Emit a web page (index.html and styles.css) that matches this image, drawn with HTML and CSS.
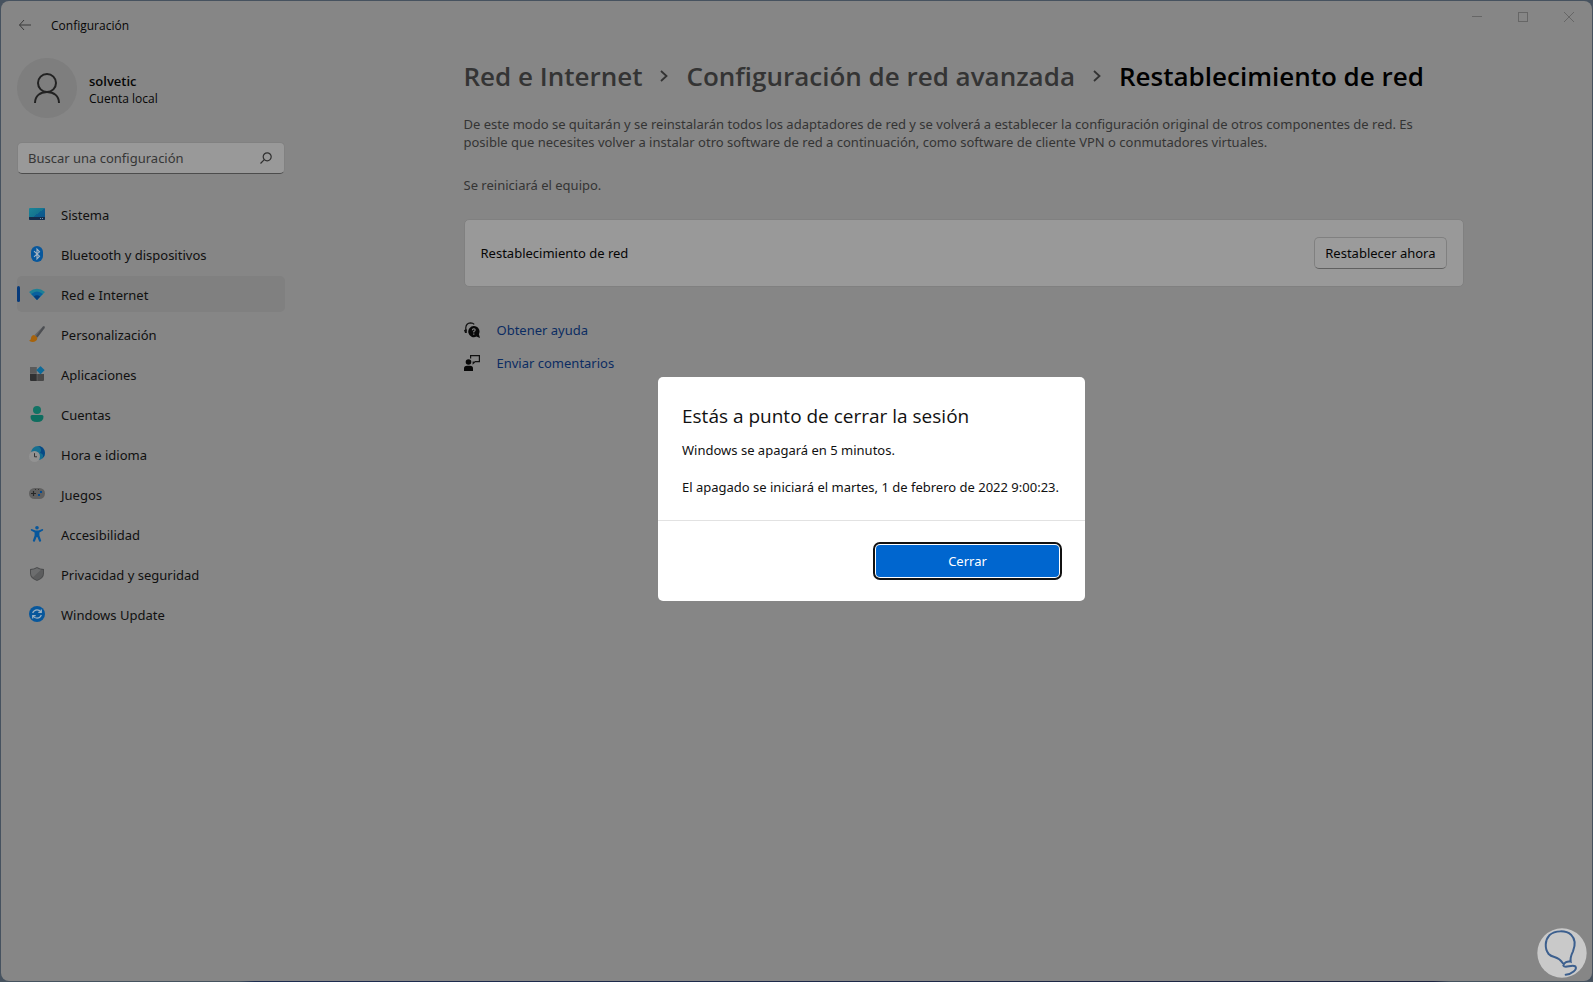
FILE: index.html
```html
<!DOCTYPE html>
<html lang="es">
<head>
  <meta charset="UTF-8" />
  <title>Configuración - Restablecimiento de red</title>
  <meta name="viewport" content="width=device-width, initial-scale=1.0" />
  <link rel="stylesheet" href="styles.css">
</head>
<body>

  <div class="window">

    <header class="titlebar">
      <button class="back" aria-label="Atrás">
        <svg width="14" height="14" viewBox="0 0 14 14" fill="none" stroke="#3a3a3a"><path d="M6 2 L1.5 7 L6 12 M1.5 7 H13"/></svg>
      </button>
      <span class="app-name">Configuración</span>
      <div class="controls">
        <button aria-label="Minimizar"><svg width="10" height="10" viewBox="0 0 10 10" fill="none" stroke="#666"><path d="M0 4.5 H10"/></svg></button>
        <button aria-label="Maximizar"><svg width="10" height="10" viewBox="0 0 10 10" fill="none" stroke="#666"><rect x="0.5" y="0.5" width="9" height="9"/></svg></button>
        <button aria-label="Cerrar ventana"><svg width="10" height="10" viewBox="0 0 10 10" fill="none" stroke="#666"><path d="M0 0 L10 10 M10 0 L0 10"/></svg></button>
      </div>
    </header>

    <div class="columns">

      <aside class="sidebar">
        <div class="account">
          <div class="avatar">
            <svg width="28" height="32" viewBox="0 0 28 32" fill="none" stroke="#222" stroke-width="2"><circle cx="14" cy="11" r="9"/><path d="M2 31 C2 24 7 20 14 20 S26 24 26 31"/></svg>
          </div>
          <div class="account-text">
            <div class="user">solvetic</div>
            <div class="user-type">Cuenta local</div>
          </div>
        </div>

        <div class="search">
          <input type="text" aria-label="Buscar una configuración" placeholder="Buscar una configuración">
          <svg width="12" height="12" viewBox="0 0 12 12" fill="none" stroke="#303030" stroke-width="1.2"><circle cx="7.2" cy="4.8" r="4"/><path d="M4.3 7.7 L0.5 11.5"/></svg>
        </div>

        <nav>
          <a href="#">
            <svg width="16" height="16" viewBox="0 0 16 16"><defs><linearGradient id="g-sys" x1="0" y1="0" x2="1" y2="1"><stop offset="0" stop-color="#1b8598"/><stop offset="0.5" stop-color="#14748f"/><stop offset="0.5" stop-color="#0d6090"/><stop offset="1" stop-color="#084f8a"/></linearGradient></defs><rect y="2" width="16" height="12" rx="1" fill="url(#g-sys)"/><path d="M0 11 H16 V13 Q16 14 15 14 H1 Q0 14 0 13 Z" fill="#142c4c"/><path d="M11 12.5 H12 M13 12.5 H14" stroke="#7494ac"/></svg>
            Sistema
          </a>
          <a href="#">
            <svg width="16" height="16" viewBox="0 0 16 16"><rect x="2" width="12" height="16" rx="6" fill="#07579c"/><path d="M5 5.2 L10.5 10.2 L8 12.8 V3.2 L10.5 5.8 L5 10.8" fill="none" stroke="#a8b6c4" stroke-width="1.1"/></svg>
            Bluetooth y dispositivos
          </a>
          <a href="#" class="active">
            <svg width="16" height="16" viewBox="0 0 16 16"><path d="M0 6 Q8 -0.5 16 6 L8 14 Z" fill="#1d8096"/><path d="M2.2 8 Q8 3 13.8 8 L8 14 Z" fill="#08609e"/><path d="M4.8 10.6 Q8 8 11.2 10.6 L8 14 Z" fill="#053d7c"/></svg>
            Red e Internet
          </a>
          <a href="#">
            <svg width="16" height="16" viewBox="0 0 16 16"><path d="M5.5 9 L14 0.6 Q16 -0.4 15.6 2 L8.4 11.6 Z" fill="#646668"/><path d="M14 0.6 Q16 -0.4 15.6 2 L8.4 11.6 L7 10.2 Z" fill="#4c4e52"/><path d="M5.2 9 Q2.2 9.4 2 12.2 Q1.8 14.2 0 14.8 Q5 17.4 7.6 14.2 Q8.8 12.4 7.8 11 Z" fill="#a7630b"/></svg>
            Personalización
          </a>
          <a href="#">
            <svg width="16" height="16" viewBox="0 0 16 16"><path d="M1 1 H7.8 V7.8 H1 Z" fill="#5a5a5a"/><path d="M1 8 H7.8 V15 H2 Q1 15 1 14 Z" fill="#303132"/><path d="M8.2 8 H15 V14 Q15 15 14 15 H8.2 Z" fill="#484848"/><rect x="8.5" y="1.2" width="6" height="6" rx="0.6" transform="rotate(45 11.5 4.2)" fill="#0e6a98"/></svg>
            Aplicaciones
          </a>
          <a href="#">
            <svg width="16" height="16" viewBox="0 0 16 16"><circle cx="8" cy="4" r="4" fill="#117365"/><path d="M3 9 H13 Q14.5 9 14.5 10.8 Q14.5 16 8 16 Q1.5 16 1.5 10.8 Q1.5 9 3 9 Z" fill="#0e6d5f"/></svg>
            Cuentas
          </a>
          <a href="#">
            <svg width="16" height="16" viewBox="0 0 16 16"><circle cx="9" cy="7" r="7" fill="#166f90"/><path d="M9 0 Q14 3 11 7 Q16 8 13 12.8 Q16 10.5 16 7 Q15 0 9 0 Z" fill="#074986"/><circle cx="5.5" cy="10.5" r="5.5" fill="#929292"/><path d="M5.5 7.2 V10.8 H8" fill="none" stroke="#333"/></svg>
            Hora e idioma
          </a>
          <a href="#">
            <svg width="16" height="16" viewBox="0 0 16 16"><rect y="2" width="16" height="11" rx="5.5" fill="#606060"/><path d="M2 7.5 H7 M4.5 5 V10" stroke="#282828" stroke-width="1.2"/><rect x="11" y="5" width="2" height="2" fill="#064b8f"/><rect x="9" y="8" width="2" height="2" fill="#064b8f"/><path d="M6 3.5 H7 M9 3.5 H10" stroke="#333"/></svg>
            Juegos
          </a>
          <a href="#">
            <svg width="16" height="16" viewBox="0 0 16 16"><circle cx="8" cy="1.8" r="1.8" fill="#07579c"/><path d="M2.6 3 L6.5 4.6 H9.5 L13.4 3 Q14.6 3.2 14 4.4 L10.4 6.4 V9.5 L12.2 14.8 Q11.6 16.2 10.2 15.6 L8.4 11 H7.6 L5.8 15.6 Q4.4 16.2 3.8 14.8 L5.6 9.5 V6.4 L2 4.4 Q1.4 3.2 2.6 3 Z" fill="#07579c"/></svg>
            Accesibilidad
          </a>
          <a href="#">
            <svg width="16" height="16" viewBox="0 0 16 16"><path d="M8 1 Q11 3 15 3 V7.5 Q15 12.5 8 15 Q1 12.5 1 7.5 V3 Q5 3 8 1 Z" fill="#4c4d4e"/><path d="M8 2.2 Q11 4 14 4 V7.5 Q13.8 11.6 8 13.9 Q2.2 11.6 2 7.5 V4 Q5 4 8 2.2 Z" fill="#5c5d5e"/><path d="M8 2.2 Q5 4 2 4 V7.5 Q2.2 9.5 4 11.2 L12 3.7 Q10 3.4 8 2.2 Z" fill="#6c6d6e"/></svg>
            Privacidad y seguridad
          </a>
          <a href="#">
            <svg width="16" height="16" viewBox="0 0 16 16"><circle cx="8" cy="8" r="8" fill="#07579c"/><path d="M3.6 7 Q5 3.8 8 3.8 Q10.5 3.8 12 6 M12.3 3.4 V6.4 H9.3 M12.4 9 Q11 12.2 8 12.2 Q5.5 12.2 4 10 M3.7 12.6 V9.6 H6.7" fill="none" stroke="#9bb0c2" stroke-width="1.2"/></svg>
            Windows Update
          </a>
        </nav>
      </aside>

      <main>
        <div class="page">
          <h1 class="breadcrumb">
            <a href="#">Red e Internet</a>
            <svg width="8" height="12" viewBox="0 0 8 12" fill="none" stroke="#333" stroke-width="1.8"><path d="M1 1 L6.5 6 L1 11"/></svg>
            <a href="#">Configuración de red avanzada</a>
            <svg width="8" height="12" viewBox="0 0 8 12" fill="none" stroke="#333" stroke-width="1.8"><path d="M1 1 L6.5 6 L1 11"/></svg>
            <span>Restablecimiento de red</span>
          </h1>

          <p class="intro">De este modo se quitarán y se reinstalarán todos los adaptadores de red y se volverá a establecer la configuración original de otros componentes de red. Es<br>posible que necesites volver a instalar otro software de red a continuación, como software de cliente VPN o conmutadores virtuales.</p>
          <p class="intro">Se reiniciará el equipo.</p>

          <div class="card">
            <span>Restablecimiento de red</span>
            <button>Restablecer ahora</button>
          </div>

          <div class="links">
            <a href="#">
              <svg width="16" height="16" viewBox="0 0 16 16"><path d="M1.8 9 V5.5 Q2.2 1 6.5 0.8 Q9 0.8 10.2 2.4" fill="none" stroke="#111" stroke-width="1.2"/><path d="M0 8 L2.8 7.2 V11 H1 Z" fill="#111"/><path d="M9.8 4 A5.6 5.6 0 1 0 12.4 14.6 L16 16 L14.9 12.2 A5.6 5.6 0 0 0 9.8 4 Z" fill="#080808"/><path d="M8.3 8.2 Q8.4 6.8 9.8 6.8 Q11.2 6.9 11.1 8.2 Q11 9 9.8 9.6 V10.6 M9.8 11.6 V12.8" fill="none" stroke="#888" stroke-width="1.1"/></svg>
              Obtener ayuda
            </a>
            <a href="#">
              <svg width="16" height="16" viewBox="0 0 16 16"><circle cx="4.5" cy="7" r="2.8" fill="#080808"/><path d="M0 16 V13.5 Q0 10.8 3 10.8 H6 Q9 10.8 9 13.5 V16 Z" fill="#080808"/><path d="M6.6 3.5 V0.6 H15.4 V6.6 H11.2 L9.2 8.4 V6.4" fill="none" stroke="#111" stroke-width="1.2"/></svg>
              Enviar comentarios
            </a>
          </div>
        </div>
      </main>

    </div>
  </div>

  <!-- shutdown warning -->
  <div class="dialog" role="dialog" aria-labelledby="dialog-title">
    <div class="dialog-body">
      <h2 id="dialog-title">Estás a punto de cerrar la sesión</h2>
      <p>Windows se apagará en 5 minutos.</p>
      <p>El apagado se iniciará el martes, 1 de febrero de 2022 9:00:23.</p>
    </div>
    <div class="dialog-footer">
      <button>Cerrar</button>
    </div>
  </div>

  <div class="badge">
    <svg width="50" height="50" viewBox="0 0 150 150"><circle cx="75" cy="75" r="74" fill="#c9c9c9"/><path d="M77 105 C62 82 48 92 35 78 C22 62 24 36 37 22 C54 6 88 7 102 20 C116 34 116 50 108 70 C102 82 99 90 101 101 C92 98 80 104 79 113 C84 123 104 108 115 115 C122 124 104 139 86 140" fill="none" stroke="#3c5f8e" stroke-width="6" stroke-linecap="round"/></svg>
  </div>

</body>
</html>
```
FILE: styles.css
```css
* {
  box-sizing: border-box;
}
body {
  margin: 0;
  padding: 1px;
  min-height: 100vh;
  display: flex;
  background: linear-gradient(to right, #46535f 15%, #1c2c50 16%, #1c2440 90%, #46535f 91%) bottom / 100% 1px no-repeat, #46525f;
  font-family: "Noto Sans", "Open Sans", sans-serif;
  font-size: 13px;
  line-height: 18px;
  color: #060606;
}
button, input {
  font: inherit;
  color: inherit;
}
a {
  text-decoration: none;
}
svg {
  display: block;
  flex: none;
}
h1, h2 {
  font-family: "Open Sans", "Noto Sans", sans-serif;
}
.window {
  flex: 1;
  background: #868686;
  border-radius: 8px;
}

/* title bar */
.titlebar {
  display: flex;
  height: 48px;
  align-items: center;
  padding-left: 17px;
}
.titlebar button {
  display: flex;
  align-items: center;
  justify-content: center;
  padding: 0;
  border: none;
  background: none;
}
.app-name {
  margin-left: 19px;
  padding-top: 2px;
  font-family: "Open Sans", "Noto Sans", sans-serif;
  font-size: 12px;
}
.controls {
  display: flex;
  align-self: flex-start;
  margin-left: auto;
}
.controls button {
  width: 46px;
  height: 32px;
}

/* sidebar */
.columns {
  display: flex;
}
.sidebar {
  width: 318px;
  flex: none;
  padding: 9px 34px 0 16px;
}
.account {
  display: flex;
  align-items: center;
  gap: 12px;
}
.account-text {
  padding-top: 4px;
  font-family: "Open Sans", "Noto Sans", sans-serif;
}
.avatar {
  display: flex;
  align-items: center;
  justify-content: center;
  width: 60px;
  height: 60px;
  border-radius: 50%;
  background: #7e7e7e;
}
.user {
  font-weight: 600;
}
.user-type {
  font-size: 12px;
}
.search {
  display: flex;
  align-items: center;
  height: 32px;
  margin: 24px 0 22px;
  padding: 0 12px 0 10px;
  border: 1px solid #818181;
  border-bottom-color: #4c4c4c;
  border-radius: 5px;
  background: #999;
}
.search input {
  flex: 1;
  min-width: 0;
  padding: 0;
  border: none;
  outline: none;
  background: none;
}
.search input::placeholder {
  color: #363636;
  opacity: 1;
}
nav {
  display: flex;
  flex-direction: column;
  gap: 4px;
}
nav a {
  position: relative;
  display: flex;
  align-items: center;
  gap: 16px;
  height: 36px;
  padding: 2px 0 0 12px;
  border-radius: 5px;
  color: #101010;
}
nav svg {
  margin-bottom: 2px;
}
nav a.active {
  background: #808080;
}
nav a.active::before {
  content: "";
  position: absolute;
  left: 0;
  top: 10px;
  width: 3px;
  height: 16px;
  border-radius: 2px;
  background: #063a7a;
}

/* content */
main {
  flex: 1;
  padding: 8px 16px 0 32px;
}
.page {
  max-width: 1000px;
  margin: 0 auto;
}
.breadcrumb {
  display: flex;
  align-items: center;
  gap: 18px;
  margin: 0 0 20px;
  font-size: 26px;
  font-weight: 600;
  line-height: 38px;
  white-space: nowrap;
}
.breadcrumb a {
  color: #343434;
}
.breadcrumb span {
  color: #000;
}
.intro {
  margin: 0 0 25px;
  color: #343434;
}
.card {
  display: flex;
  align-items: center;
  justify-content: space-between;
  height: 68px;
  padding: 0 16px;
  border: 1px solid #808080;
  border-radius: 5px;
  background: #999;
}
.card button {
  height: 32px;
  padding: 0 10px;
  border: 1px solid #808080;
  border-bottom-color: #606060;
  border-radius: 5px;
  background: #9b9b9b;
}
.links {
  display: flex;
  flex-direction: column;
  align-items: flex-start;
  gap: 15px;
  margin-top: 34px;
}
.links a {
  display: flex;
  align-items: center;
  gap: 17px;
  color: #0b2c62;
}

/* dialog */
.dialog {
  position: fixed;
  left: 658px;
  top: 377px;
  width: 427px;
  border-radius: 5px;
  background: #fff;
  color: #111;
}
.dialog-body {
  padding: 24px;
  border-bottom: 1px solid #e2e2e2;
}
.dialog h2 {
  margin: 0 0 10px;
  font-size: 19px;
  font-weight: 400;
  line-height: 30px;
}
.dialog p {
  margin: 0;
  white-space: nowrap;
}
.dialog p + p {
  margin-top: 19px;
}
.dialog-footer {
  display: flex;
  justify-content: flex-end;
  padding: 24px 26px;
}
.dialog-footer button {
  width: 183px;
  height: 32px;
  border: none;
  border-radius: 4px;
  background: #0066cf;
  color: #fff;
  box-shadow: 0 0 0 1px #fff, 0 0 0 3px #111;
}

.badge {
  position: fixed;
  right: 6px;
  bottom: 4px;
}
```
